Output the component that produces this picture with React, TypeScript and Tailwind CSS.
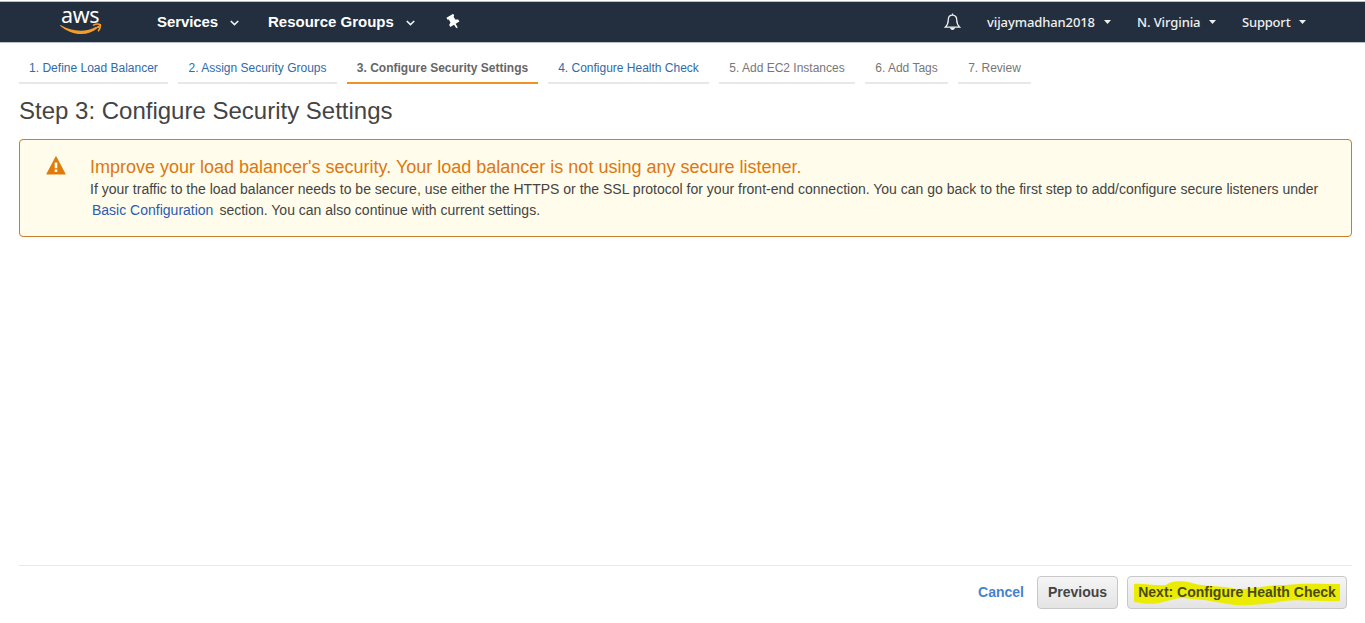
import React from "react";

type Tab = { label: string; state: "link" | "active" | "disabled"; box: string };

const tabs: Tab[] = [
  { label: "1. Define Load Balancer", state: "link", box: "w-[149px]" },
  { label: "2. Assign Security Groups", state: "link", box: "w-[159px]" },
  { label: "3. Configure Security Settings", state: "active", box: "w-[191px]" },
  { label: "4. Configure Health Check", state: "link", box: "w-[161px]" },
  { label: "5. Add EC2 Instances", state: "disabled", box: "w-[136px]" },
  { label: "6. Add Tags", state: "disabled", box: "w-[83px]" },
  { label: "7. Review", state: "disabled", box: "w-[73px]" },
];

const tabStyles = {
  link: "border-[#e8e8e8] text-[#2f6ba6]",
  active: "border-[#f29222] font-bold text-[#666666]",
  disabled: "border-[#e8e8e8] text-[#777777]",
};

function Chevron() {
  return (
    <svg width="9" height="6" viewBox="0 0 9 6" fill="none" stroke="#eef1f4" strokeWidth="1.7">
      <path d="M.8 1l3.7 3.6L8.200 1" />
    </svg>
  );
}

function Caret() {
  return (
    <svg width="7" height="4" viewBox="0 0 7 4" fill="#f0f0f0">
      <path d="M0 0h7L3.500 4z" />
    </svg>
  );
}

function AwsLogo() {
  return (
    <div className="relative h-[40px] w-[44px] shrink-0">
      <span className="absolute left-px top-px font-['Noto_Sans'] text-[21.5px] leading-[24px] tracking-[-0.4px] text-white">
        aws
      </span>
      <svg className="absolute left-0 top-[21px]" width="44" height="12" viewBox="0 0 44 12">
        <path d="M.5 2C7 6 13.500 7.700 20.500 7.700c5.500 0 11-1.500 15.500-4l1.400 1.500C33 9 27.500 11 21 11 13 11 6 7.800 0 2.700z" fill="#f49b2c" />
        <path d="M33 2.400c2.600-1.400 5.900-1.500 7.300-.8.300 1.800-.5 4.500-2.200 6.600" fill="none" stroke="#f49b2c" strokeWidth="1.600" />
        <path d="M35.500 4.500L40 1.700l-.8 3.500z" fill="#f49b2c" />
      </svg>
    </div>
  );
}

function Header() {
  return (
    <header className="flex h-[43px] items-center border-b border-[#b9c0c9] bg-[#232f3e] pt-px text-white shadow-[inset_0_1px_0_#fff,inset_0_2px_0_#b9c0c9]">
      <div className="ml-[60px]">
        <AwsLogo />
      </div>
      <div className="ml-[53px] flex items-center pt-px text-[15px] font-bold">
        <span className="w-[61px] whitespace-nowrap tracking-[-0.1px]">Services</span>
        <span className="ml-[12px] mt-[2px]"><Chevron /></span>
        <span className="ml-[29px] w-[126px] whitespace-nowrap">Resource Groups</span>
        <span className="ml-[12px] mt-[2px]"><Chevron /></span>
        <svg className="ml-[31px]" width="15" height="16" viewBox="0 0 15 16" fill="#fff">
          <g transform="rotate(-31 7.500 8)">
            <path d="M3.600.8h7.800v2.100l-1.100.6v3.300l2.500 1.600v2.300H2.200V8.400l2.500-1.600V3.500l-1.100-.6z" />
            <path d="M6.600 10h1.800v4l-.9 1.600-.9-1.600z" />
          </g>
        </svg>
      </div>
      <div className="ml-auto flex items-center pt-px font-['Noto_Sans'] text-[13px] font-medium text-[#f0f0f0]">
        <svg className="mr-[26px]" width="17" height="18" viewBox="0 0 17 18" fill="none" stroke="#f0f0f0" strokeWidth="1.300">
          <path d="M8.500 2.200c-2.900 0-4.200 2-4.200 4.500 0 4.200-1.200 5.600-3 7.400h14.400c-1.800-1.800-3-3.200-3-7.400 0-2.500-1.300-4.500-4.200-4.500zM8.500.5v1.700" />
          <path d="M6 14.600h5c-.1 1.600-1.100 2.500-2.500 2.500S6.100 16.200 6 14.600z" fill="#f0f0f0" stroke="none" />
        </svg>
        <span className="mt-[2px] w-[108px] whitespace-nowrap tracking-[-0.1px]">vijaymadhan2018</span>
        <span className="ml-[9px]"><Caret /></span>
        <span className="ml-[26px] mt-[2px] w-[63px] whitespace-nowrap tracking-[-0.1px]">N. Virginia</span>
        <span className="ml-[9px]"><Caret /></span>
        <span className="ml-[26px] mt-[2px] w-[48px] whitespace-nowrap tracking-[-0.2px]">Support</span>
        <span className="ml-[9px] mr-[59px]"><Caret /></span>
      </div>
    </header>
  );
}

const buttonStyle =
  "relative flex h-[33px] items-center justify-center whitespace-nowrap rounded-[4px] border border-[#c8c8c8] bg-linear-to-b from-[#f5f5f5] to-[#e4e4e4] text-[14px] font-bold text-[#444444]";

export default function App() {
  return (
    <div className="flex h-[623px] w-[1365px] flex-col overflow-hidden bg-white font-['Liberation_Sans',sans-serif] text-[#444444]">
      <Header />
      <nav className="ml-[19px] mt-[9px] flex gap-[10px] text-[12px]">
        {tabs.map((t) => (
          <div
            key={t.label}
            className={`flex h-[32px] justify-center whitespace-nowrap border-b-2 pt-[7px] leading-[18px] ${t.box} ${tabStyles[t.state]}`}
          >
            {t.label}
          </div>
        ))}
      </nav>
      <h1 className="ml-[19px] mt-[11px] text-[24px] leading-[32px] text-[#444444]">
        Step 3: Configure Security Settings
      </h1>
      <section className="ml-[19px] mt-[12px] flex h-[98px] w-[1333px] rounded-[4px] border border-[#c77c2e] bg-[#fffceb]">
        <svg className="ml-[26px] mt-[16px] shrink-0" width="20" height="19" viewBox="0 0 20 19">
          <path d="M10 1L19 18H1z" fill="#df7b0c" stroke="#df7b0c" strokeWidth="1.200" strokeLinejoin="round" />
          <path d="M8.700 6.500h2.600v5.700H8.700zM8.700 13.500h2.600v2.500H8.700z" fill="#fffceb" />
        </svg>
        <div className="ml-[24px] mt-[16px] whitespace-nowrap">
          <h2 className="text-[18px] leading-[22px] text-[#dd7711]">
            Improve your load balancer's security. Your load balancer is not using any secure listener.
          </h2>
          <p className="mt-px text-[14px] leading-[21px] tracking-[0.005px]">
            If your traffic to the load balancer needs to be secure, use either the HTTPS or the SSL protocol for your front-end connection. You can go back to the first step to add/configure secure listeners under
          </p>
          <p className="text-[14px] leading-[21px]">
            <a className="ml-[2px] mr-[6px] text-[#2a5db0]">Basic Configuration</a>
            <span>section. You can also continue with current settings.</span>
          </p>
        </div>
      </section>
      <footer className="ml-[19px] mr-[13px] mt-auto flex h-[58px] items-start justify-end border-t border-[#e9e9e9] pr-[5px] pt-[10px]">
        <a className="mr-[13px] text-[14px] font-bold leading-[33px] text-[#4683cf]">Cancel</a>
        <button className={`${buttonStyle} mr-[9px] w-[81px]`}>Previous</button>
        <button className={`${buttonStyle} w-[220px]`}>
          <span className="relative z-10 text-[#4a4a10]">Next: Configure Health Check</span>
          <svg className="absolute left-[5px] top-[3px]" width="210" height="28" viewBox="0 0 210 28" fill="#eaec05">
            <path d="M1 4C10 3 20 6 33 5 37 1 50 0 59 3 69 7 88 5 103 9 120 10 137 4 153 5 169 3 190 4 207 4V21C190 22 166 19 151 21 136 24 117 26 102 25 87 23 70 19 57 19 47 16 36 21 26 23 16 25 9 23 1 22z" />
          </svg>
        </button>
      </footer>
    </div>
  );
}
